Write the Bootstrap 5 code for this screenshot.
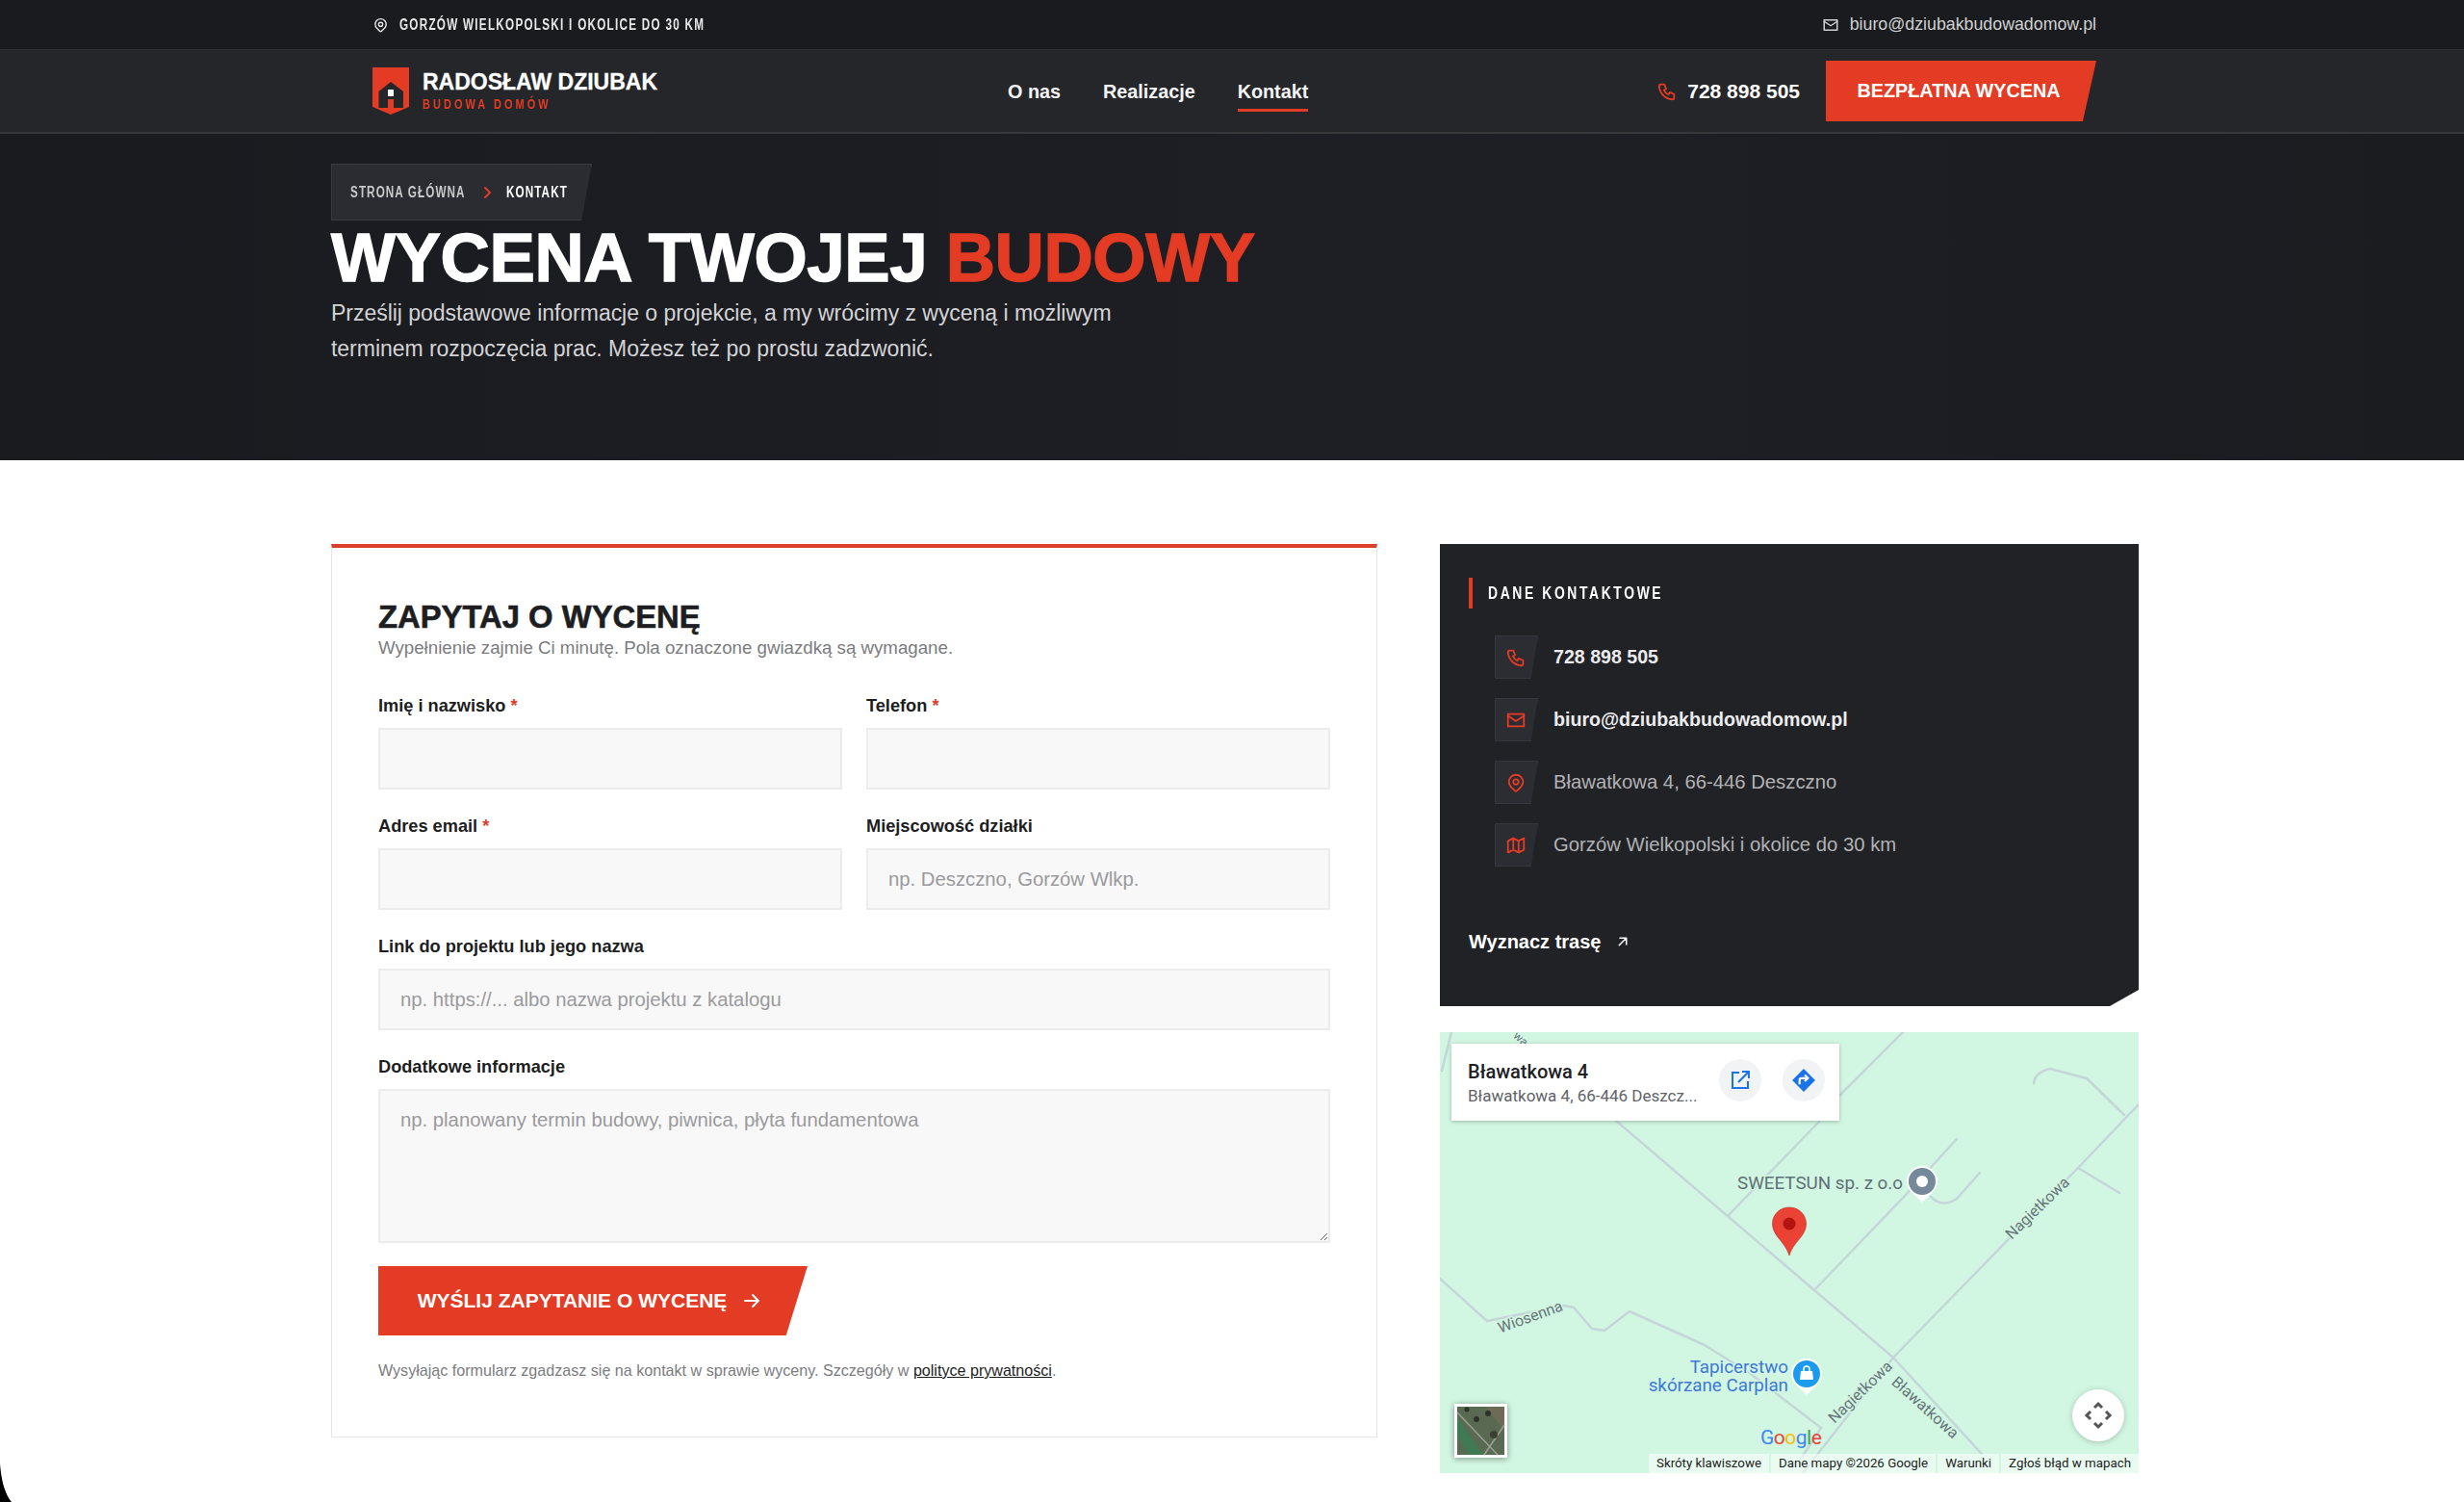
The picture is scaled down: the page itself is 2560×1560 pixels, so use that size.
<!DOCTYPE html>
<html lang="pl">
<head>
    <meta charset="UTF-8">
    <meta name="viewport" content="width=device-width, initial-scale=1.0">
    <title>Kontakt - Radosław Dziubak</title>
    <link href="https://cdn.jsdelivr.net/npm/bootstrap@5.3.0/dist/css/bootstrap.min.css" rel="stylesheet">
    <style>
        html, body { height: 1560px; overflow: hidden; }
        body { font-family: "Liberation Sans", Arial, sans-serif; color: #1d1e22; background: #fff; position: relative; }
        .squeeze { display: inline-block; white-space: nowrap; transform: scaleX(.73); transform-origin: 0 50%; font-weight: 700; }
        .ico { fill: none; stroke: currentColor; stroke-width: 2; stroke-linecap: round; stroke-linejoin: round; flex: none; }
        .red { color: #e33b24; }

        .topbar { height: 51px; background: #1a1b1f; color: #e8e8e8; }
        .navwrap { margin-left: 387px; width: 1791px; }
        .topbar-city { font-size: 16px; letter-spacing: 1.75px; gap: 11px; }
        .topbar-mail { font-size: 17.800px; color: #cfd0d2; gap: 11px; }

        .mainbar { height: 88px; background: #25262a; border-top: 1px solid #2e2f33; border-bottom: 2px solid #37383c; color: #fff; }
        .brand-link { width: 294px; gap: 14px; }
        .brand-name { font-size: 23px; font-weight: 700; line-height: 26px; white-space: nowrap; -webkit-text-stroke: .3px currentColor; margin-top: -2px; }
        .brand-sub { font-size: 15px; letter-spacing: 4.200px; line-height: 16px; color: #e33b24; display: block; margin-top: 2px; }
        .menu { position: relative; margin-left: 366px; gap: 44px; font-size: 19.800px; font-weight: 700; }
        .menu a { color: #f4f4f4; text-decoration: none; padding: 8px 0 3px; border-bottom: 3px solid transparent; }
        .menu a.on { border-bottom-color: #e33b24; }
        .nav-phone { font-size: 21px; font-weight: 700; gap: 10px; margin-right: 27px; }
        .btn-wycena { background: #e33b24; color: #fff; border: 0; border-radius: 0; font-weight: 700; clip-path: polygon(0 0, 100% 0, 95% 100%, 0 100%); }
        .btn-wycena:hover { background: #e33b24; color: #fff; }
        .btn-nav { width: 281px; height: 63px; font-size: 19.800px; padding: 0 5px 0 0; }

        .hero { height: 339px; background: linear-gradient(90deg, #1a1b1f, #1e1f24 60%, #1b1c20); color: #fff; padding: 31px 0 0 344px; }
        .crumbs { width: 271px; height: 59px; background: #2b2c31; border: 1px solid #3a3b40; font-size: 16px; letter-spacing: 1.500px; padding-left: 19px; clip-path: polygon(0 0, 100% 0, 96% 100%, 0 100%); color: #c9c9cb; margin-bottom: 1px; }
        .crumbs .crumb-home { margin-right: -42px; }
        .crumbs svg { margin: 0 14px 0 16px; }
        .crumbs b { color: #fff; }
        .hero h1 { font-size: 71px; font-weight: 700; line-height: 76px; margin: 0 0 1px; letter-spacing: -.4px; -webkit-text-stroke: 1.400px currentColor; white-space: nowrap; }
        .hero p { font-size: 23px; line-height: 37px; color: #d3d3d5; margin: 0; width: 860px; letter-spacing: -.03px; }

        .content { margin: 87px 0 0 344px; width: 1878px; gap: 65px; align-items: flex-start; }
        .form-box { width: 1087px; height: 928px; border: 1px solid #e6e6e6; border-top: 4px solid #d9412c; padding: 54px 48px 0; }
        .form-box h2 { font-size: 32.800px; font-weight: 700; margin: 0; line-height: 36px; -webkit-text-stroke: .6px currentColor; }
        .form-sub { font-size: 18.700px; color: #7b7c80; line-height: 22px; margin: 3px 0 37px; }
        .form-box .row { --bs-gutter-x: 25px; --bs-gutter-y: 0; }
        .field { margin-bottom: 26px; }
        .form-box .form-label { font-size: 18.200px; font-weight: 700; line-height: 24px; margin-bottom: 11px; display: block; }
        .form-box .form-label i { color: #d9412c; font-style: normal; }
        .form-box .form-control { height: 64px; border-radius: 0; background: #f8f8f8; border: 2px solid #ececec; font-size: 20.300px; padding: 0 21px; font-family: inherit; }
        .form-box .form-control::placeholder { color: #9a9a9d; }
        .form-box textarea.form-control { height: 160px; padding-top: 15px; }
        .btn-send { width: 446px; height: 72px; font-size: 21px; padding: 0 5px 0 0; margin-top: -2px; gap: 14px; }
        .form-note { font-size: 16.100px; color: #7b7c80; margin: 25px 0 0; line-height: 22px; white-space: nowrap; }
        .form-note a { color: #1d1e22; }

        .side { width: 726px; }
        .contact-box { height: 480px; background: #212226; color: #fff; padding: 35px 30px 0; clip-path: polygon(0 0, 100% 0, 100% 463px, 696px 100%, 0 100%); }
        .contact-head { border-left: 4px solid #e33b24; height: 32px; padding-left: 16px; font-size: 19px; letter-spacing: 3.600px; margin-bottom: 28px; line-height: 32px; }
        .contact-row { height: 45px; margin: 0 0 20px 27px; gap: 16px; font-size: 20.300px; color: #b2b2b5; }
        .contact-row.lit { color: #ececee; font-weight: 700; font-size: 19.600px; }
        .contact-ico { width: 45px; height: 45px; background: #2c2d32; border: 1px solid #36373c; color: #e33b24; clip-path: polygon(0 0, 100% 0, 84% 100%, 0 100%); padding-right: 2px; }
        .route { font-size: 20px; font-weight: 700; color: #fff; text-decoration: none; gap: 14px; margin-top: 43px; }

        .map-box { width: 726px; height: 458px; margin-top: 27px; position: relative; background: #d1f6e1; overflow: hidden; }
        .map-box > svg { display: block; }
        .map-card { position: absolute; left: 12px; top: 12px; width: 403px; height: 80px; background: #fff; box-shadow: 0 1px 4px rgba(0,0,0,.25); padding: 16px 0 0 17px; }
        .map-title { font-family: Roboto, sans-serif; font-size: 20px; font-weight: 500; line-height: 26px; color: #202124; }
        .map-addr { font-family: Roboto, sans-serif; font-size: 17px; line-height: 24px; color: #5f6368; white-space: nowrap; }
        .map-btn { position: absolute; top: 16px; width: 44px; height: 44px; border-radius: 50%; background: #f1f3f4; }
        .map-attr { position: absolute; right: 0; bottom: 0; height: 20px; gap: 2px; font-family: Roboto, sans-serif; font-size: 13.300px; line-height: 20px; color: #222; }
        .map-attr span { background: rgba(255,255,255,.55); padding: 0 8px; white-space: nowrap; }
        .corner { position: absolute; left: 0; bottom: 0; }
    </style>
</head>
<body>
    <div class="topbar d-flex align-items-center">
        <div class="navwrap d-flex justify-content-between align-items-center">
            <div class="topbar-city d-flex align-items-center">
                <svg class="ico" width="17" height="18" viewBox="0 0 24 24"><circle cx="12" cy="11" r="3"/><path d="M17.657 16.657l-4.243 4.243a2 2 0 0 1 -2.827 0l-4.244 -4.243a8 8 0 1 1 11.314 0z"/></svg>
                <span class="squeeze">GORZÓW WIELKOPOLSKI I OKOLICE DO 30 KM</span>
            </div>
            <div class="topbar-mail d-flex align-items-center">
                <svg class="ico" width="18" height="18" viewBox="0 0 24 24"><rect x="3" y="5" width="18" height="14"/><path d="M3 7l9 6l9 -6"/></svg>
                <span>biuro@dziubakbudowadomow.pl</span>
            </div>
        </div>
    </div>

    <nav class="mainbar d-flex align-items-center">
        <div class="navwrap d-flex align-items-center">
            <a href="#" class="brand-link d-flex align-items-center text-white text-decoration-none">
                <svg width="38" height="49" viewBox="0 0 38 49" class="flex-shrink-0">
                    <path fill="#e33b24" d="M0 0h38v41l-19 8l-19-8z"/>
                    <path fill="#25262a" d="M19 15l13 10v17h-10v-9h-6v9h-9.500v-17z"/>
                    <rect x="16" y="23" width="6" height="7" fill="#fff"/>
                </svg>
                <span>
                    <span class="brand-name d-block">RADOSŁAW DZIUBAK</span>
                    <span class="brand-sub squeeze">BUDOWA DOMÓW</span>
                </span>
            </a>
            <div class="menu d-flex align-items-center">
                <a href="#">O nas</a>
                <a href="#">Realizacje</a>
                <a href="#" class="on">Kontakt</a>
            </div>
            <div class="ms-auto d-flex align-items-center">
                <div class="nav-phone d-flex align-items-center">
                    <svg class="ico red" width="22" height="22" viewBox="0 0 24 24"><path d="M5 4h4l2 5l-2.500 1.500a11 11 0 0 0 5 5l1.500 -2.500l5 2v4a2 2 0 0 1 -2 2a16 16 0 0 1 -15 -15a2 2 0 0 1 2 -2"/></svg>
                    <span>728 898 505</span>
                </div>
                <a href="#" class="btn btn-wycena btn-nav d-flex align-items-center justify-content-center">BEZPŁATNA WYCENA</a>
            </div>
        </div>
    </nav>

    <header class="hero">
        <div class="crumbs d-flex align-items-center">
            <span class="squeeze crumb-home">STRONA GŁÓWNA</span>
            <svg class="ico red" width="10" height="14" viewBox="0 0 10 14"><path d="M2 2l5 5l-5 5"/></svg>
            <b class="squeeze">KONTAKT</b>
        </div>
        <h1>WYCENA TWOJEJ <span class="red">BUDOWY</span></h1>
        <p>Prześlij podstawowe informacje o projekcie, a my wrócimy z wyceną i możliwym terminem rozpoczęcia prac. Możesz też po prostu zadzwonić.</p>
    </header>

    <main class="content d-flex">
        <form class="form-box">
            <h2>ZAPYTAJ O WYCENĘ</h2>
            <p class="form-sub">Wypełnienie zajmie Ci minutę. Pola oznaczone gwiazdką są wymagane.</p>
            <div class="row">
                <div class="col-6 field">
                    <label class="form-label" for="imie">Imię i nazwisko <i>*</i></label>
                    <input class="form-control" id="imie" type="text">
                </div>
                <div class="col-6 field">
                    <label class="form-label" for="tel">Telefon <i>*</i></label>
                    <input class="form-control" id="tel" type="text">
                </div>
                <div class="col-6 field">
                    <label class="form-label" for="mail">Adres email <i>*</i></label>
                    <input class="form-control" id="mail" type="text">
                </div>
                <div class="col-6 field">
                    <label class="form-label" for="miejsce">Miejscowość działki</label>
                    <input class="form-control" id="miejsce" type="text" placeholder="np. Deszczno, Gorzów Wlkp.">
                </div>
                <div class="col-12 field">
                    <label class="form-label" for="projekt">Link do projektu lub jego nazwa</label>
                    <input class="form-control" id="projekt" type="text" placeholder="np. https://... albo nazwa projektu z katalogu">
                </div>
                <div class="col-12 field">
                    <label class="form-label" for="info">Dodatkowe informacje</label>
                    <textarea class="form-control" id="info" placeholder="np. planowany termin budowy, piwnica, płyta fundamentowa"></textarea>
                </div>
            </div>
            <button type="button" class="btn btn-wycena btn-send d-flex align-items-center justify-content-center">
                <span>WYŚLIJ ZAPYTANIE O WYCENĘ</span>
                <svg class="ico" width="24" height="24" viewBox="0 0 24 24" stroke-width="2.500"><path d="M5 12h14M13 18l6 -6M13 6l6 6"/></svg>
            </button>
            <p class="form-note">Wysyłając formularz zgadzasz się na kontakt w sprawie wyceny. Szczegóły w <a href="#">polityce prywatności</a>.</p>
        </form>

        <aside class="side">
            <section class="contact-box">
                <div class="contact-head"><span class="squeeze">DANE KONTAKTOWE</span></div>
                <div class="contact-row lit d-flex align-items-center">
                    <span class="contact-ico d-flex align-items-center justify-content-center"><svg class="ico" width="22" height="22" viewBox="0 0 24 24"><path d="M5 4h4l2 5l-2.500 1.500a11 11 0 0 0 5 5l1.500 -2.500l5 2v4a2 2 0 0 1 -2 2a16 16 0 0 1 -15 -15a2 2 0 0 1 2 -2"/></svg></span>
                    <span>728 898 505</span>
                </div>
                <div class="contact-row lit d-flex align-items-center">
                    <span class="contact-ico d-flex align-items-center justify-content-center"><svg class="ico" width="22" height="22" viewBox="0 0 24 24"><rect x="3" y="5" width="18" height="14"/><path d="M3 7l9 6l9 -6"/></svg></span>
                    <span>biuro@dziubakbudowadomow.pl</span>
                </div>
                <div class="contact-row d-flex align-items-center">
                    <span class="contact-ico d-flex align-items-center justify-content-center"><svg class="ico" width="22" height="22" viewBox="0 0 24 24"><circle cx="12" cy="11" r="3"/><path d="M17.657 16.657l-4.243 4.243a2 2 0 0 1 -2.827 0l-4.244 -4.243a8 8 0 1 1 11.314 0z"/></svg></span>
                    <span>Bławatkowa 4, 66-446 Deszczno</span>
                </div>
                <div class="contact-row d-flex align-items-center">
                    <span class="contact-ico d-flex align-items-center justify-content-center"><svg class="ico" width="22" height="22" viewBox="0 0 24 24"><path d="M3 7l6 -3l6 3l6 -3v13l-6 3l-6 -3l-6 3v-13M9 4v13M15 7v13"/></svg></span>
                    <span>Gorzów Wielkopolski i okolice do 30 km</span>
                </div>
                <a href="#" class="route d-inline-flex align-items-center">
                    <span>Wyznacz trasę</span>
                    <svg class="ico" width="18" height="18" viewBox="0 0 24 24" stroke-width="2.500"><path d="M17 7l-10 10M8 7h9v9"/></svg>
                </a>
            </section>

            <section class="map-box">
                <svg width="726" height="458" viewBox="0 0 726 458">
                    <g fill="none" stroke="#c5d6da" stroke-width="2.500" stroke-linejoin="round" stroke-linecap="round">
                        <path d="M100 20L183 92L389 268L471 338L563 438"/>
                        <path d="M726 75L663 141L471 338L377 458"/>
                        <path d="M389 268L483 170L537 111"/>
                        <path d="M299 191L394 93M415 66L481 0"/>
                        <path d="M505 165L512 173Q524 182 537 173L561 146"/>
                        <path d="M617 53Q618 42 634 38L672 48L711 86"/>
                        <path d="M663 141L706 167"/>
                        <path d="M0 256L49 300L129 284L139 286L158 308L171 310L197 290L275 325L323 355L396 411L377 440"/>
                        <path d="M2 40L12 0"/>
                    </g>
                    <text x="84" y="11" text-anchor="middle" transform="rotate(42 84 7)" font-family="Roboto" font-size="12" fill="#68757c">wa</text>
                    <text x="94" y="301" text-anchor="middle" transform="rotate(-20 94 296)" font-family="Roboto" font-size="16" fill="#68757c" stroke="#d1f6e1" stroke-width="3" paint-order="stroke">Wiosenna</text>
                    <text x="621" y="188" text-anchor="middle" transform="rotate(-44 621 183)" font-family="Roboto" font-size="16" fill="#68757c" stroke="#d1f6e1" stroke-width="3" paint-order="stroke">Nagietkowa</text>
                    <text x="437" y="379" text-anchor="middle" transform="rotate(-44 437 374)" font-family="Roboto" font-size="16" fill="#68757c" stroke="#d1f6e1" stroke-width="3" paint-order="stroke">Nagietkowa</text>
                    <text x="504" y="395" text-anchor="middle" transform="rotate(42 504 390)" font-family="Roboto" font-size="16" fill="#68757c" stroke="#d1f6e1" stroke-width="3" paint-order="stroke">Bławatkowa</text>
                    <text x="481" y="163" text-anchor="end" font-family="Roboto" font-size="18.800" fill="#5f7078" stroke="#d1f6e1" stroke-width="3" paint-order="stroke">SWEETSUN sp. z o.o</text>
                    <text font-family="Roboto" font-size="18.800" fill="#3f78d8" text-anchor="end" stroke="#d1f6e1" stroke-width="3" paint-order="stroke"><tspan x="362" y="354">Tapicerstwo</tspan><tspan x="362" y="373">skórzane Carplan</tspan></text>

                    <path d="M501 139a16 16 0 0 1 16 16c0 10-9 14-16 22c-7-8-16-12-16-22a16 16 0 0 1 16-16z" fill="#fff"/>
                    <circle cx="501" cy="155" r="14" fill="#76899a"/><circle cx="501" cy="155" r="6" fill="#fff"/>
                    <path d="M381 339a16 16 0 0 1 16 16c0 10-9 14-16 22c-7-8-16-12-16-22a16 16 0 0 1 16-16z" fill="#fff"/>
                    <circle cx="381" cy="355" r="14" fill="#1a9bf0"/>
                    <path d="M375 352h12l1 9h-14z" fill="#fff"/><path d="M378 352v-2a3 3 0 0 1 6 0v2" fill="none" stroke="#fff" stroke-width="1.500"/>

                    <path d="M363 182c10 0 17.500 7.500 17.500 17c0 13-13 18-17.500 33c-4.500-15-17.500-20-17.500-33c0-9.500 7.500-17 17.500-17z" fill="#ea4335" stroke="#c5221f" stroke-width=".6"/>
                    <circle cx="363" cy="199" r="6.500" fill="#b3140f"/>

                    <text x="333" y="428" font-family="Roboto" font-size="21" letter-spacing="-.5"><tspan fill="#4285f4">G</tspan><tspan fill="#ea4335">o</tspan><tspan fill="#fbbc05">o</tspan><tspan fill="#4285f4">g</tspan><tspan fill="#34a853">l</tspan><tspan fill="#ea4335">e</tspan></text>

                    <rect x="15" y="386" width="55" height="56" fill="#fff" filter="drop-shadow(0 1px 3px rgba(0,0,0,.4))"/>
                    <rect x="18" y="389" width="49" height="50" fill="#5a6a52"/>
                    <path d="M18 400L45 439H30L18 420z" fill="#3f7a55"/>
                    <path d="M18 389h30l19 25v-25z" fill="#6f6a55"/>
                    <path d="M18 395L60 439M67 408L46 439" stroke="#9aa096" stroke-width="1.500" fill="none"/>
                    <circle cx="38" cy="402" r="3" fill="#2d3328"/><circle cx="50" cy="396" r="3" fill="#2d3328"/><circle cx="56" cy="418" r="4" fill="#3a4032"/><circle cx="28" cy="392" r="2.500" fill="#2d3328"/>

                    <circle cx="684" cy="398" r="27" fill="#fff" filter="drop-shadow(0 1px 3px rgba(0,0,0,.2))"/>
                    <path d="M680 390l4-4l4 4M680 406l4 4l4-4M676 394l-4 4l4 4M692 394l4 4l-4 4" fill="none" stroke="#555" stroke-width="3"/>
                </svg>

                <div class="map-card">
                    <div class="map-title">Bławatkowa 4</div>
                    <div class="map-addr">Bławatkowa 4, 66-446 Deszcz...</div>
                    <span class="map-btn d-flex align-items-center justify-content-center" style="left:278px">
                        <svg width="24" height="24" viewBox="0 0 24 24" fill="none" stroke="#1a73e8" stroke-width="2"><path d="M11 4H4v16h16v-7M14 3h7v7M21 3L10 14"/></svg>
                    </span>
                    <span class="map-btn d-flex align-items-center justify-content-center" style="left:344px">
                        <svg width="26" height="26" viewBox="0 0 24 24"><path fill="#1a73e8" d="M12 1l11 11l-11 11l-11-11z"/><path d="M8 16v-4q0-2 2-2h6M13 7l3 3l-3 3" fill="none" stroke="#fff" stroke-width="2"/></svg>
                    </span>
                </div>
                <div class="map-attr d-flex">
                    <span>Skróty klawiszowe</span><span>Dane mapy ©2026 Google</span><span>Warunki</span><span>Zgłoś błąd w mapach</span>
                </div>
            </section>
        </aside>
    </main>
    <svg class="corner" width="14" height="40" viewBox="0 0 14 40"><path d="M0 0Q2 28 12 40H0z" fill="#000"/></svg>

    <script src="https://cdn.jsdelivr.net/npm/bootstrap@5.3.0/dist/js/bootstrap.bundle.min.js"></script>
</body>
</html>
